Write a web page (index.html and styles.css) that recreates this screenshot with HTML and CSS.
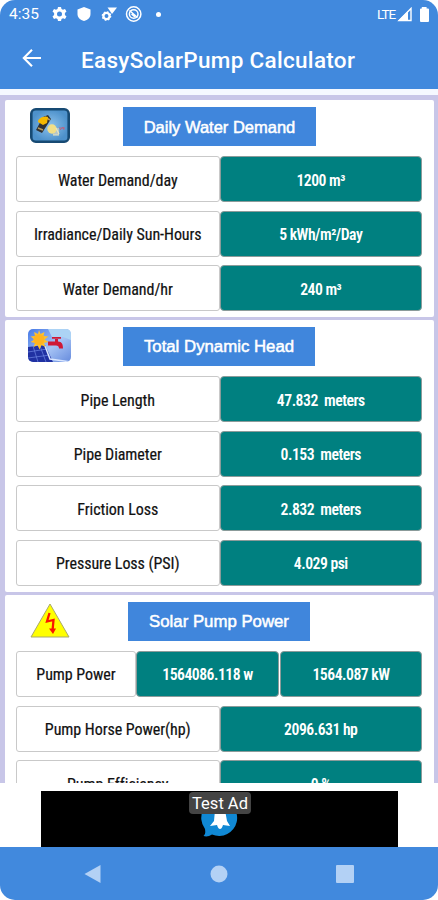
FILE: index.html
```html
<!DOCTYPE html>
<html lang="en">
<head>
<meta charset="utf-8">
<title>EasySolarPump Calculator</title>
<link rel="stylesheet" href="styles.css">
</head>
<body>
<div class="phone">
  <header class="top">
    <div class="status">
      <span class="clock">4:35</span>
      <svg class="status-icons" width="106" height="18" viewBox="0 0 106 18" fill="#fff">
        <g transform="translate(9.5 9)"><path fill-rule="evenodd" d="M-1.5-7h3l.5 2 1.5.8 2-.7 1.5 2.5-1.6 1.5v1.8L7 2.4 5.500 4.900l-2-.7L2 5l-.5 2h-3L-2 5l-1.500-.8-2 .7L-7 2.400l1.600-1.500V-.9L-7-2.400l1.500-2.500 2 .7L-2-5zM0-2.500A2.500 2.500 0 1 0 0 2.500 2.500 2.500 0 0 0 0-2.500z"/></g>
        <path d="M34 2l6.500 2.500V9c0 3.500-2.700 6-6.500 7-3.800-1-6.500-3.500-6.500-7V4.500z"/>
        <path d="M57.500 2.500h9.500L62 9z"/><circle cx="56.500" cy="11" r="3.100" fill="none" stroke="#fff" stroke-width="2.300"/><circle cx="56.500" cy="11" r="4.200" fill="none" stroke="#fff" stroke-width="1.200" stroke-dasharray="1.600 1.700"/>
        <g fill="none" stroke="#fff" stroke-width="1.500"><circle cx="83.700" cy="9" r="7.200"/><circle cx="83.700" cy="9" r="4.300"/><path d="M79.500 5.500l8 7M81.500 9l3.500 3"/></g>
      </svg>
      <i class="dot"></i>
      <span class="lte">LTE</span>
      <svg width="34" height="18" viewBox="0 0 34 18" fill="#fff"><path d="M12 6v10H2z"/><path d="M15 3.500V15.500H3z" fill="none" stroke="#fff" stroke-width="1.400"/><path d="M25.800 2h4.800v1.500H32a1 1 0 0 1 1 1V16a1 1 0 0 1-1 1h-7a1 1 0 0 1-1-1V4.500a1 1 0 0 1 1-1h.8z"/></svg>
    </div>
    <div class="appbar">
      <svg width="20" height="20" viewBox="0 0 20 20" fill="none" stroke="#fff" stroke-width="2.100"><path d="M19 10H2.500M10 1.800L1.800 10l8.200 8.200"/></svg>
      <h1>EasySolarPump Calculator</h1>
    </div>
  </header>

  <main class="content">
    <section class="card">
      <div class="head">
        <svg class="pic" width="40" height="35" viewBox="0 0 40 35">
          <defs><radialGradient id="panel"><stop offset="0" stop-color="#8dc2ec"/><stop offset="1" stop-color="#4d91cb"/></radialGradient></defs>
          <rect x="1.300" y="1.300" width="37.400" height="32.400" rx="4.500" fill="url(#panel)" stroke="#174a73" stroke-width="2.600"/>
          <path d="M13 9l5-2 3 4-9 14-6-3z" fill="#303235"/><path d="M8 20l5 2M15 9l5 3" stroke="#b99a58" stroke-width="1.500"/>
          <path d="M8 14c0-4 5-6 10-5l-1 6-4 2z" fill="#f6b900"/>
          <path d="M22 20h7v7h-6z" fill="#b4c6cb"/><circle cx="22" cy="21" r="4.700" fill="#f1df88"/><path d="M26 20l3 6M23 27h6" stroke="#e8e4bf" stroke-width="1.200"/><path d="M30 22l3-3 1 3M29 20h6" stroke="#b76784" fill="none"/>
        </svg>
        <h2 class="title title-water">Daily Water Demand</h2>
      </div>
      <div class="row"><div class="label"><span>Water Demand/day</span></div><div class="value"><span>1200 m³</span></div></div>
      <div class="row"><div class="label"><span>Irradiance/Daily Sun-Hours</span></div><div class="value"><span>5 kWh/m²/Day</span></div></div>
      <div class="row"><div class="label"><span>Water Demand/hr</span></div><div class="value"><span>240 m³</span></div></div>
    </section>

    <section class="card">
      <div class="head">
        <svg class="pic pic-wide" width="43" height="33" viewBox="0 0 43 33">
          <defs><linearGradient id="sky" x2="1" y2="1"><stop offset="0" stop-color="#4478e6"/><stop offset=".55" stop-color="#a7c4f5"/><stop offset="1" stop-color="#668bdd"/></linearGradient><clipPath id="round"><rect width="43" height="33" rx="5"/></clipPath></defs>
          <g clip-path="url(#round)"><rect width="43" height="33" fill="url(#sky)"/><path d="M20 0h23v11l-8-3-10 2z" fill="#acd3f5"/><path d="M0 18l17-2 8 17H0z" fill="#2031a2"/><path d="M0 23l19-3M0 29l22-3M5 17l5 16M12 17l6 16" stroke="#6e86e4" stroke-width=".7"/><path d="M17 17l5 13 21 3" stroke="#d9e6ff" stroke-width="1.500" fill="none"/>
          <path d="M11 1l1.500 4 4-2-1 4 5 .5-4 3 4 2.500-4.500 1 1.500 4-4-2-2 4.500-2-4.500-4 2 1.500-4-4.500-1 4-2.500-4-3 4.500-.5-1-4 4 2z" fill="#ffc02b"/><circle cx="11" cy="10.500" r="5.500" fill="#ffb41f"/>
          <path d="M20 12.500h7v-2.500h3v2.500c4 0 5 3 5 7h-4c0-2-1-3-3-3h-8zM24 8h9v1.800h-9z" fill="#cf1836"/></g>
        </svg>
        <h2 class="title title-head">Total Dynamic Head</h2>
      </div>
      <div class="row"><div class="label"><span>Pipe Length</span></div><div class="value"><span>47.832&nbsp; meters</span></div></div>
      <div class="row"><div class="label"><span>Pipe Diameter</span></div><div class="value"><span>0.153&nbsp; meters</span></div></div>
      <div class="row"><div class="label"><span>Friction Loss</span></div><div class="value"><span>2.832&nbsp; meters</span></div></div>
      <div class="row"><div class="label"><span>Pressure Loss (PSI)</span></div><div class="value"><span>4.029 psi</span></div></div>
    </section>

    <section class="card">
      <div class="head">
        <svg class="pic" width="40" height="35" viewBox="0 0 40 35"><path d="M20 1L39 34H1z" fill="#ff0" stroke="#a9a96b"/><path d="M19.500 10L17 18.500l6.500-1.500-1 11" fill="none" stroke="#fa1600" stroke-width="2.300"/><path d="M19 25.500h7L23 31z" fill="#fa1600"/></svg>
        <h2 class="title title-power">Solar Pump Power</h2>
      </div>
      <div class="row row-split"><div class="label"><span>Pump Power</span></div><div class="value"><span>1564086.118 w</span></div><div class="value"><span>1564.087 kW</span></div></div>
      <div class="row"><div class="label"><span>Pump Horse Power(hp)</span></div><div class="value"><span>2096.631 hp</span></div></div>
      <div class="row"><div class="label"><span>Pump Efficiency</span></div><div class="value"><span>0 %</span></div></div>
    </section>
  </main>

  <div class="ad-slot">
    <div class="ad">
      <svg width="40" height="32" viewBox="0 0 40 32"><path d="M20-8a18 18 0 1 1-8 34.500c-3 2-6 2.500-8.500 1.500 2-2 2-4 1.500-7A18 18 0 0 1 20-8z" fill="#1088d4"/><path d="M15 2h10l2 11 3 5-7-1c-1 3-2 4-3 4s-2-1-3-4l-7 1 4-5z" fill="#fff"/></svg>
      <span class="ad-tag">Test Ad</span>
    </div>
  </div>
  <nav class="nav">
    <svg width="18" height="20" viewBox="0 0 18 20"><path d="M16.500 1v18L.5 10z"/></svg>
    <svg width="18" height="18" viewBox="0 0 18 18"><circle cx="9" cy="9" r="8.500"/></svg>
    <svg width="18" height="18" viewBox="0 0 18 18"><rect width="18" height="18" rx="1"/></svg>
  </nav>
</div>
</body>
</html>
```
FILE: styles.css
```css
* { box-sizing: border-box; }
body { margin: 0; background: #fff; font-family: Roboto, sans-serif; }
.phone { width: 438px; height: 900px; display: flex; flex-direction: column; overflow: hidden; border-radius: 15px; background: #fff; }
.top { height: 89px; flex: none; background: #4189dd; color: #fff; }
.status { height: 28px; padding: 0 8px 0 9px; display: flex; align-items: center; }
.clock { width: 41px; font-size: 15.5px; }
.status-icons { flex: none; }
.dot { width: 5px; height: 5px; border-radius: 50%; background: #fff; }
.lte { margin-left: auto; font-size: 13.5px; letter-spacing: -1.1px; margin-right: 1px; }
.appbar { height: 61px; padding: 0 0 0 22px; display: flex; align-items: center; }
.appbar h1 { margin: 3px 0 0 39px; font-size: 22.5px; font-weight: 500; letter-spacing: .3px; white-space: nowrap; }
.appbar svg { margin-bottom: 1px; }
.content { height: 694px; flex: none; overflow: hidden; background: #c8c6e8; border-top: 6px solid #f5f8ff; padding: 5px 4px 0 5px; display: flex; flex-direction: column; gap: 3px; }
.card { flex: none; background: #fff; border-radius: 2px; padding: 7px 12px 6px 11px; }
.head { height: 49px; display: flex; align-items: flex-start; }
.pic { flex: none; margin: 1px 0 0 14px; }
.pic-wide { margin-left: 12px; margin-top: 2px; }
.title { margin: 0; height: 39px; padding-top: 2px; display: flex; align-items: center; justify-content: center; background: #4086dc; color: #fff; font: 500 16.8px/1 "Liberation Sans", sans-serif; -webkit-text-stroke: .5px #fff; white-space: nowrap; }
.title-water { width: 193px; margin-left: 53px; font-size: 16.5px; }
.title-head { width: 192px; margin-left: 52px; }
.title-power { width: 182px; margin-left: 58px; }
.row { height: 46px; margin-bottom: 8.6px; display: grid; grid-template-columns: 203.5px 1fr; }
.row:last-child { margin-bottom: 0; }
.row-split { grid-template-columns: 120px 143px 1fr; }
.label, .value { display: flex; align-items: center; justify-content: center; border-radius: 3px; white-space: nowrap; padding-top: 2px; }
.label { border: 1.5px solid #c9c9c9; color: #111; font-size: 16px; -webkit-text-stroke: .2px #111; }
.value { border: 1px solid #8b9b9a; background: #008080; color: #fff; font-weight: 600; font-size: 15.7px; border-radius: 4px; }
.row-split .value + .value { margin-left: 1px; }
.label span { font-stretch: 75%; letter-spacing: -.05px; }
.value span { font-stretch: 75%; letter-spacing: -.5px; }
.ad-slot { height: 64px; flex: none; padding: 8px 40px 0 41px; }
.ad { position: relative; height: 56px; background: #000; display: flex; justify-content: center; overflow: hidden; }
.ad svg { margin-top: 17px; }
.ad-tag { position: absolute; top: 1px; left: 148px; width: 62px; height: 22px; border-radius: 4px; background: #444; color: #fff; font-size: 16.5px; line-height: 23px; text-align: center; white-space: nowrap; }
.nav { flex: 1; background: #4189dd; display: flex; align-items: center; justify-content: space-between; padding: 0 84px; fill: #b3d1f5; }
```
